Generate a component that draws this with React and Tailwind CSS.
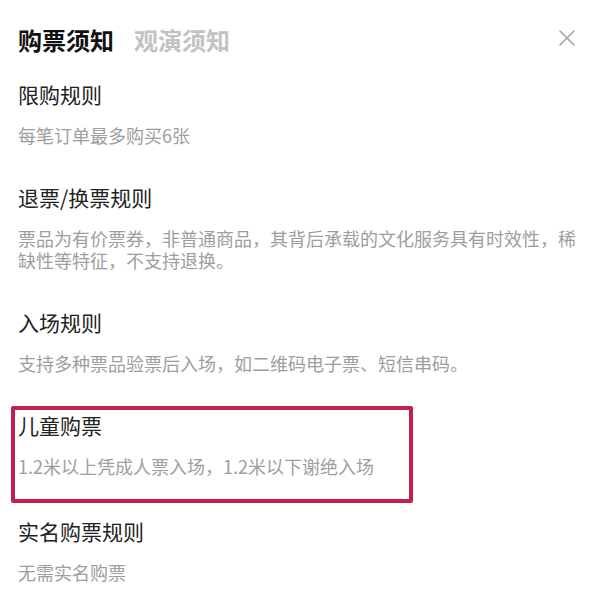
import React from 'react';

const rules = [
  { title: '限购规则', text: '每笔订单最多购买6张' },
  {
    title: '退票/换票规则',
    text: '票品为有价票券，非普通商品，其背后承载的文化服务具有时效性，稀缺性等特征，不支持退换。',
  },
  { title: '入场规则', text: '支持多种票品验票后入场，如二维码电子票、短信串码。' },
  { title: '儿童购票', text: '1.2米以上凭成人票入场，1.2米以下谢绝入场', marked: true },
  { title: '实名购票规则', text: '无需实名购票' },
];

const Rule = ({ title, text }) => (
  <div>
    <h3 className="text-[21px] leading-[28px] text-[#222]">{title}</h3>
    <p className="mt-[16px] text-[18px] leading-[22px] text-[#9e9e9e]">{text}</p>
  </div>
);

const App = () => {
  return (
    <div
      className="w-[600px] h-[597px] overflow-hidden bg-white"
      style={{ fontFamily: '"Noto Sans CJK SC", "Noto Sans", sans-serif' }}
    >
      {/* Header tabs */}
      <div className="flex items-center justify-between pl-[18px] pr-[24px] pt-[28px]">
        <div className="flex items-center gap-[20px] text-[24px] leading-[24px] font-bold">
          <span className="text-[#111]">购票须知</span>
          <span className="text-[#c2c2c2]">观演须知</span>
        </div>
        <svg className="-mt-[5px]" width="18" height="18" viewBox="0 0 18 18" fill="none" stroke="#a0a0a0" strokeWidth="1.5" strokeLinecap="round">
          <path d="M2 2L16 16M16 2L2 16" />
        </svg>
      </div>

      {/* Rule list */}
      <div className="flex flex-col gap-[37px] pl-[18px] pr-[16px] pt-[28px]">
        {rules.map((r) =>
          r.marked ? (
            <div
              key={r.title}
              className="-ml-[7px] -mt-[5px] -mb-[23px] w-[402px] rounded-[2px] border-4 border-[#c2204c] pl-[3px] pt-[1px] pb-[22px]"
            >
              <Rule title={r.title} text={r.text} />
            </div>
          ) : (
            <Rule key={r.title} title={r.title} text={r.text} />
          )
        )}
      </div>
    </div>
  );
};

export default App;
